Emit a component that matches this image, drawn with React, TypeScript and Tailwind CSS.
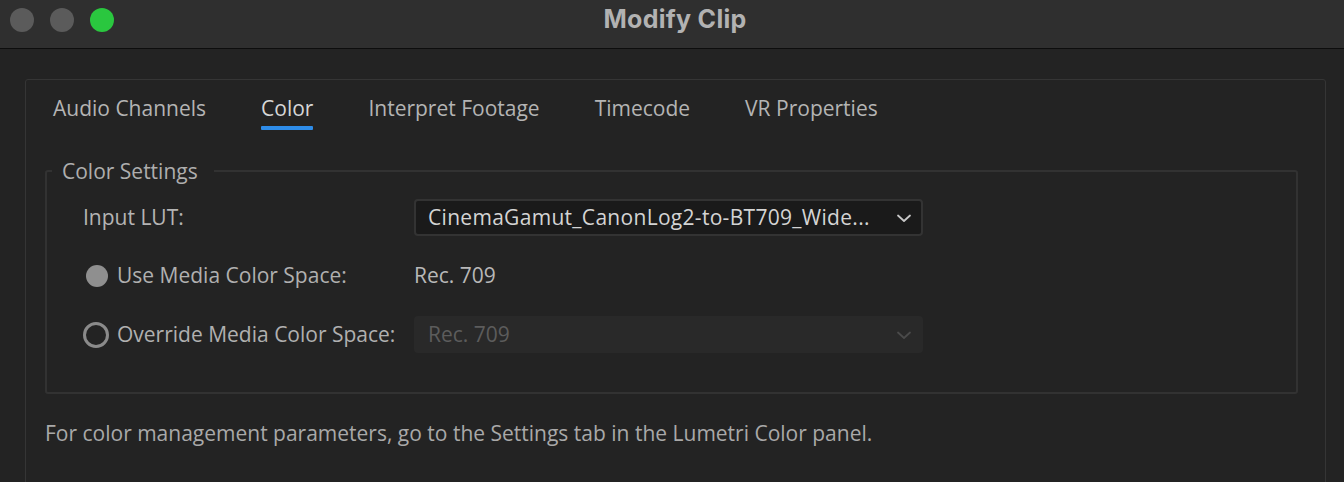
import React from "react";

function Chevron({ className }: { className?: string }) {
  return (
    <svg width="16" height="10" viewBox="0 0 16 10" className={className} fill="none">
      <path d="M2 2.5 L8 8 L14 2.5" stroke="currentColor" strokeWidth="1.8" strokeLinecap="round" strokeLinejoin="round" />
    </svg>
  );
}

export default function App() {
  const tabs = ["Audio Channels", "Color", "Interpret Footage", "Timecode", "VR Properties"];
  return (
    <div className="w-[1344px] h-[482px] overflow-hidden bg-[#232323] flex flex-col" style={{ fontFamily: "'Open Sans', Lato, sans-serif" }}>
      {/* Title bar */}
      <div className="h-[49px] shrink-0 bg-[#2f2f2f] border-b border-[#0d0d0d] grid grid-cols-[1fr_auto_1fr] items-center">
        <div className="flex items-center gap-[16px] pl-[10px] -mt-[8px]">
          <div className="w-[24px] h-[24px] rounded-full bg-[#5b5b5b]" />
          <div className="w-[24px] h-[24px] rounded-full bg-[#5b5b5b]" />
          <div className="w-[24px] h-[24px] rounded-full bg-[#2ac73f]" />
        </div>
        <div className="text-[25px] font-bold text-[#b2b2b2] -mt-[8px] ml-[6px] tracking-[0.3px]" style={{ fontFamily: "Inter, 'Open Sans', sans-serif" }}>
          Modify Clip
        </div>
        <div />
      </div>

      {/* Body */}
      <div className="flex-1 pt-[30px] pl-[25px]">
        <div className="w-[1301px] h-[460px] border border-[#353535] rounded-t-[3px] px-[19px]">
          {/* Tabs */}
          <div className="flex items-start pt-[13px] pl-[8px] gap-[55px] text-[21px] text-[#b4b4b4]">
            {tabs.map((t) => (
              <div key={t} className="flex flex-col items-stretch">
                <span className={t === "Color" ? "text-[#d6d6d6] leading-[30px]" : "leading-[30px]"}>{t}</span>
                {t === "Color" ? <div className="h-[4px] mt-[3px] bg-[#2e8ce8] rounded-[1px]" /> : null}
              </div>
            ))}
          </div>

          {/* Fieldset */}
          <fieldset className="mt-[27px] w-[1253px] h-[237px] border-[2px] border-[#323232] rounded-[3px] px-[36px]">
            <legend className="-ml-[31px] pl-[10px] pr-[16px] text-[21px] leading-[28px] text-[#aeaeae]">Color Settings</legend>
            <div className="grid grid-cols-[331px_509px] items-center mt-[14px]">
              <div className="text-[21px] text-[#b4b4b4]">Input LUT:</div>
              <div className="h-[37px] rounded-[4px] bg-[#1a1a1a] border-[2px] border-[#333333] flex items-center justify-between pl-[12px] pr-[9px]">
                <span className="text-[21px] tracking-[0.3px] text-[#d4d4d4] whitespace-nowrap">CinemaGamut_CanonLog2-to-BT709_Wide...</span>
                <Chevron className="text-[#c8c8c8]" />
              </div>

              <div className="flex items-center h-[37px] mt-[21px]">
                <div className="w-[22px] h-[22px] rounded-full bg-[#8f8f8f] ml-[3px]" />
                <span className="ml-[9px] text-[21px] text-[#b0b0b0]">Use Media Color Space:</span>
              </div>
              <div className="h-[37px] mt-[21px] flex items-center text-[21px] text-[#b8b8b8]">Rec. 709</div>

              <div className="flex items-center h-[37px] mt-[22px]">
                <div className="w-[26px] h-[26px] rounded-full border-[3px] border-[#8a8a8a]" />
                <span className="ml-[8px] text-[21px] text-[#b0b0b0]">Override Media Color Space:</span>
              </div>
              <div className="h-[37px] mt-[22px] rounded-[4px] bg-[#292929] flex items-center justify-between pl-[14px] pr-[11px]">
                <span className="text-[21px] text-[#5c5c5c]">Rec. 709</span>
                <Chevron className="text-[#4a4a4a]" />
              </div>
            </div>
          </fieldset>

          <div className="mt-[24px] text-[21px] text-[#a9a9a9]">
            For color management parameters, go to the Settings tab in the Lumetri Color panel.
          </div>
        </div>
      </div>
    </div>
  );
}
